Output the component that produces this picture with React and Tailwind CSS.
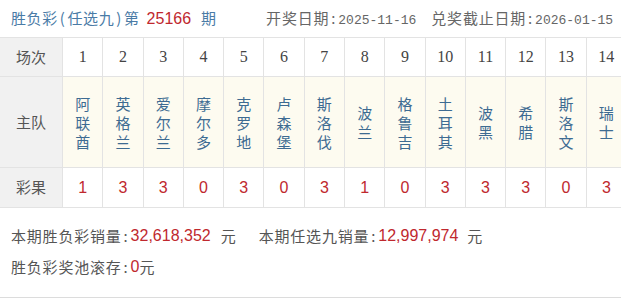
import React from "react";

const teams = [
  "阿联酋", "英格兰", "爱尔兰", "摩尔多", "克罗地", "卢森堡", "斯洛伐",
  "波兰", "格鲁吉", "土耳其", "波黑", "希腊", "斯洛文", "瑞士",
];
const results = ["1", "3", "3", "0", "3", "0", "3", "1", "0", "3", "3", "3", "0", "3"];

const cjk = "font-['Noto_Sans_CJK_SC',sans-serif]";

export default function App() {
  return (
    <div className={`w-[621px] h-[298px] overflow-hidden bg-white ${cjk}`}>
      <div className="w-[626px]">
        <div className="h-[37px] flex items-center pl-[11px] text-[15px]">
          <span className="text-[#4a7ba6] tracking-[0.6px]">
            胜负彩<span className="px-[2px]">(</span>任选九<span className="px-[2px]">)</span>第
          </span>
          <span className="ml-[7px] text-[#c0282e] font-['Liberation_Sans',sans-serif] text-[16px]">25166</span>
          <span className="ml-[10px] text-[#4a7ba6]">期</span>
          <span className="ml-[50px] text-[#666] tracking-[0.8px]">
            开奖日期<span className="px-[2px]">:</span><span className="font-['Liberation_Mono',monospace] text-[13px] tracking-normal">2025-11-16</span>
          </span>
          <span className="ml-[15px] text-[#666] tracking-[0.8px]">
            兑奖截止日期<span className="px-[2px]">:</span><span className="font-['Liberation_Mono',monospace] text-[13px] tracking-normal">2026-01-15</span>
          </span>
        </div>
        <div className="grid grid-cols-[62px_repeat(14,1fr)] grid-rows-[38px_90px_39px] gap-px bg-[#e3e3e3] border-y border-[#e3e3e3]">
          <div className="bg-[#f1f1f1] flex items-center justify-center text-[15px] text-[#555]">场次</div>
          {teams.map((_, i) => (
            <div key={"n" + i} className="bg-white flex items-center justify-center font-['Liberation_Serif',serif] text-[16px] text-[#444]">
              {i + 1}
            </div>
          ))}
          <div className="bg-[#f1f1f1] flex items-center justify-center text-[15px] text-[#555]">主队</div>
          {teams.map((t, i) => (
            <div key={"t" + i} className="bg-[#fdfbf0] flex flex-col items-center justify-center text-[15px] leading-[19px] text-[#3d6b92]">
              {t.split("").map((c, j) => (
                <span key={j}>{c}</span>
              ))}
            </div>
          ))}
          <div className="bg-[#f1f1f1] flex items-center justify-center text-[15px] text-[#555]">彩果</div>
          {results.map((r, i) => (
            <div key={"r" + i} className="bg-white flex items-center justify-center font-['Liberation_Sans',sans-serif] text-[16px] text-[#c0282e]">
              {r}
            </div>
          ))}
        </div>
        <div className="h-[90px] border-b border-[#dcdcdc] pl-[11px] pt-[17px] text-[15px] text-[#555]">
          <div className="flex items-center h-[22px]">
            <span className="tracking-[0.8px]">本期胜负彩销量<span className="px-[2px]">:</span></span>
            <span className="text-[#c0282e] font-['Liberation_Sans',sans-serif] text-[16px]">32,618,352</span>
            <span className="ml-[10px]">元</span>
            <span className="ml-[23px] tracking-[0.8px]">本期任选九销量<span className="px-[2px]">:</span></span>
            <span className="text-[#c0282e] font-['Liberation_Sans',sans-serif] text-[16px]">12,997,974</span>
            <span className="ml-[9px]">元</span>
          </div>
          <div className="flex items-center h-[22px] mt-[9px]">
            <span className="tracking-[0.8px]">胜负彩奖池滚存<span className="px-[2px]">:</span></span>
            <span className="text-[#c0282e] font-['Liberation_Sans',sans-serif] text-[16px]">0</span>
            <span>元</span>
          </div>
        </div>
      </div>
    </div>
  );
}
